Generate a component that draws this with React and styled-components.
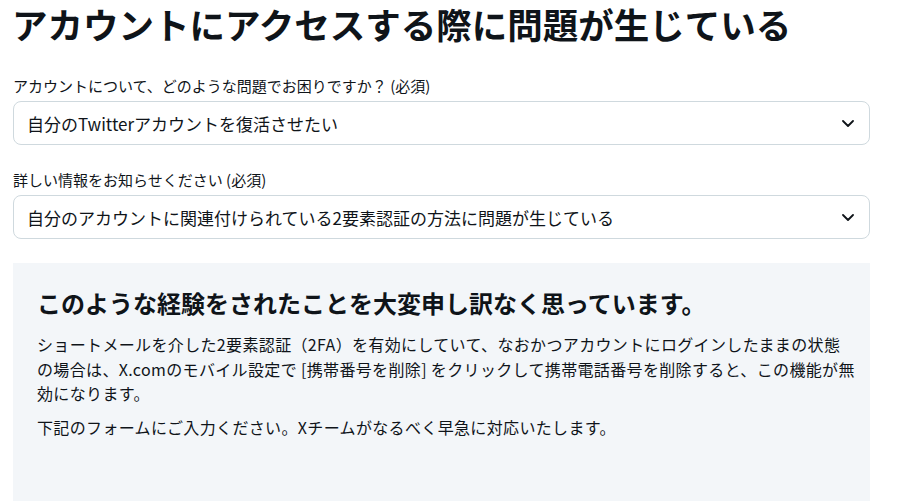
import React from "react";
import styled, { createGlobalStyle } from "styled-components";

const GlobalStyle = createGlobalStyle`
  body {
    margin: 0;
    background: #ffffff;
    color: #0f1419;
    font-family: "Noto Sans CJK JP", "Noto Sans", sans-serif;
    overflow: hidden;
  }
`;

const Page = styled.main`
  width: 857px;
  padding: 0 13px;
`;

const Title = styled.h1`
  margin: 0 0 28px -1px;
  font-size: 35.5px;
  line-height: 48px;
  font-weight: 700;
  color: #0f1419;
`;

const Field = styled.div`
  display: flex;
  flex-direction: column;
  gap: 5px;
  margin-bottom: ${(p) => p.$gap || 25}px;
`;

const Label = styled.label`
  font-size: 15px;
  line-height: 20px;
  color: #0f1419;
`;

const Select = styled.div`
  display: flex;
  align-items: center;
  justify-content: space-between;
  height: 44px;
  box-sizing: border-box;
  padding: 0 15px 0 13px;
  border: 1px solid #cfd9de;
  border-radius: 8px;
  background: #fff;
  font-size: 17px;
  color: #0f1419;
  cursor: pointer;
`;

const Chevron = () => (
  <svg width="12" height="7" viewBox="0 0 12 7" fill="none">
    <path
      d="M1 1L6 6L11 1"
      stroke="#0f1419"
      strokeWidth="1.8"
      strokeLinecap="round"
      strokeLinejoin="round"
    />
  </svg>
);

const Panel = styled.section`
  background: #f3f6f9;
  padding: 24px 14px 60px 24px;
  min-height: 260px;
  box-sizing: border-box;
`;

const PanelTitle = styled.h2`
  margin: 0 0 13px;
  font-size: 24px;
  line-height: 32px;
  font-weight: 700;
`;

const Paragraph = styled.p`
  margin: 0 0 9px;
  font-size: 16px;
  line-height: 24.5px;
  letter-spacing: 0.35px;
`;

function Dropdown({ label, value, gap }) {
  return (
    <Field $gap={gap}>
      <Label>{label}</Label>
      <Select role="combobox">
        <span>{value}</span>
        <Chevron />
      </Select>
    </Field>
  );
}

export default function App() {
  return (
    <>
      <GlobalStyle />
      <Page>
        <Title>アカウントにアクセスする際に問題が生じている</Title>
        <Dropdown
          label="アカウントについて、どのような問題でお困りですか？ (必須)"
          value="自分のTwitterアカウントを復活させたい"
          gap={25}
        />
        <Dropdown
          label="詳しい情報をお知らせください (必須)"
          value="自分のアカウントに関連付けられている2要素認証の方法に問題が生じている"
          gap={24}
        />
        <Panel>
          <PanelTitle>このような経験をされたことを大変申し訳なく思っています。</PanelTitle>
          <Paragraph>
            ショートメールを介した2要素認証（2FA）を有効にしていて、なおかつアカウントにログインしたままの状態
            <br />
            の場合は、X.comのモバイル設定で [携帯番号を削除]
            をクリックして携帯電話番号を削除すると、この機能が無
            <br />
            効になります。
          </Paragraph>
          <Paragraph>下記のフォームにご入力ください。Xチームがなるべく早急に対応いたします。</Paragraph>
        </Panel>
      </Page>
    </>
  );
}
